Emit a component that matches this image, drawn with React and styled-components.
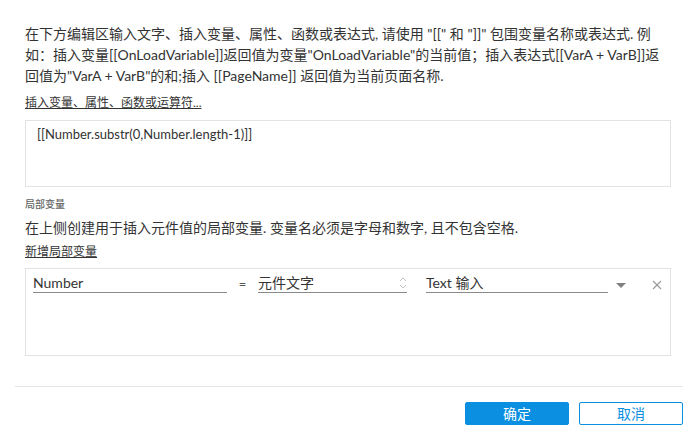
import styled, { createGlobalStyle } from 'styled-components'

const GlobalStyle = createGlobalStyle`
  html, body {
    margin: 0;
    padding: 0;
    background: #fff;
  }
  body {
    font-family: Lato, 'Noto Sans CJK SC', sans-serif;
    color: #333;
  }
`

const SpinnerIcon = () => (
  <svg width='8' height='14' viewBox='0 0 8 14' fill='none' stroke='#c4c4c4' strokeWidth='1'>
    <polyline points='1,5 4,2 7,5' />
    <polyline points='1,9 4,12 7,9' />
  </svg>
)

const CaretIcon = () => (
  <svg width='10' height='6' viewBox='0 0 10 6'>
    <polygon points='0,0 10,0 5,5' fill='#808080' />
  </svg>
)

const CloseIcon = () => (
  <svg width='10' height='10' viewBox='0 0 10 10' stroke='#9a9a9a' strokeWidth='1.1'>
    <line x1='1' y1='1' x2='9' y2='9' />
    <line x1='9' y1='1' x2='1' y2='9' />
  </svg>
)

const App = () => {
  return (
    <>
      <GlobalStyle />
      <Dialog>
        <Content>
          <Description>
            在下方编辑区输入文字、插入变量、属性、函数或表达式, 请使用 "[[" 和 "]]" 包围变量名称或表达式. 例如：插入变量[[OnLoadVariable]]返回值为变量"OnLoadVariable"的当前值；插入表达式[[VarA + VarB]]返回值为"VarA + VarB"的和;插入 [[PageName]] 返回值为当前页面名称.
          </Description>
          <LinkText>插入变量、属性、函数或运算符...</LinkText>
          <Editor>[[Number.substr(0,Number.length-1)]]</Editor>
          <SectionLabel>局部变量</SectionLabel>
          <Hint>在上侧创建用于插入元件值的局部变量. 变量名必须是字母和数字, 且不包含空格.</Hint>
          <AddLink>新增局部变量</AddLink>
          <VarBox>
            <VarRow>
              <Field $width={194}>Number</Field>
              <Equals>=</Equals>
              <Field $width={149}>
                元件文字
                <FieldIcon>
                  <SpinnerIcon />
                </FieldIcon>
              </Field>
              <Field $width={182} $gap={19}>Text 输入</Field>
              <Caret>
                <CaretIcon />
              </Caret>
              <Remove>
                <CloseIcon />
              </Remove>
            </VarRow>
          </VarBox>
        </Content>
        <Footer>
          <Button $primary>确定</Button>
          <Button>取消</Button>
        </Footer>
      </Dialog>
    </>
  )
}

const Dialog = styled.div`
  width: 698px;
  height: 441px;
  background: #fff;
  box-sizing: border-box;
`

const Content = styled.div`
  padding: 23px 27px 0 25px;
  display: flex;
  flex-direction: column;
`

const Description = styled.p`
  margin: 0;
  font-size: 14px;
  line-height: 21px;
  color: #333;
`

const LinkText = styled.div`
  margin-top: 9px;
  font-size: 12px;
  line-height: 16px;
  text-decoration: underline;
  color: #333;
`

const Editor = styled.div`
  margin-top: 9px;
  height: 67px;
  box-sizing: border-box;
  border: 1px solid #e3e3e3;
  padding: 4px 11px;
  font-size: 13px;
  line-height: 18px;
  color: #333;
`

const SectionLabel = styled.div`
  margin-top: 10px;
  font-size: 10px;
  line-height: 14px;
  font-weight: 500;
  color: #666;
`

const Hint = styled.div`
  margin-top: 6px;
  font-size: 14px;
  line-height: 21px;
`

const AddLink = styled.div`
  margin-top: 6px;
  font-size: 12px;
  line-height: 16px;
  text-decoration: underline;
`

const VarBox = styled.div`
  margin-top: 8px;
  height: 88px;
  box-sizing: border-box;
  border: 1px solid #e3e3e3;
  padding: 5px 7px 0;
`

const VarRow = styled.div`
  display: flex;
  align-items: flex-start;
`

const Field = styled.div`
  position: relative;
  width: ${p => p.$width}px;
  margin-left: ${p => p.$gap || 0}px;
  height: 18px;
  border-bottom: 1px solid #8a8a8a;
  font-size: 14px;
  line-height: 18px;
  color: #333;
  white-space: nowrap;
`

const FieldIcon = styled.span`
  position: absolute;
  right: 0;
  top: 2px;
  display: flex;
`

const Equals = styled.div`
  width: 31px;
  text-align: center;
  font-size: 13px;
  line-height: 20px;
  color: #555;
`

const Caret = styled.div`
  margin-left: 8px;
  padding-top: 9px;
  display: flex;
`

const Remove = styled.div`
  margin-left: 26px;
  padding-top: 6px;
  display: flex;
`

const Footer = styled.div`
  margin: 30px 15px 0;
  border-top: 1px solid #e5e5e5;
  padding-top: 15px;
  display: flex;
  justify-content: flex-end;
  gap: 10px;
`

const Button = styled.button`
  width: 104px;
  height: 23px;
  box-sizing: border-box;
  border-radius: 2px;
  border: 1px solid #0b8fe0;
  background: ${p => (p.$primary ? '#0b8fe0' : '#fff')};
  color: ${p => (p.$primary ? '#fff' : '#0b8fe0')};
  font-family: Lato, 'Noto Sans CJK SC', sans-serif;
  font-size: 14px;
  line-height: 21px;
  padding: 0;
  cursor: pointer;
`

export default App
